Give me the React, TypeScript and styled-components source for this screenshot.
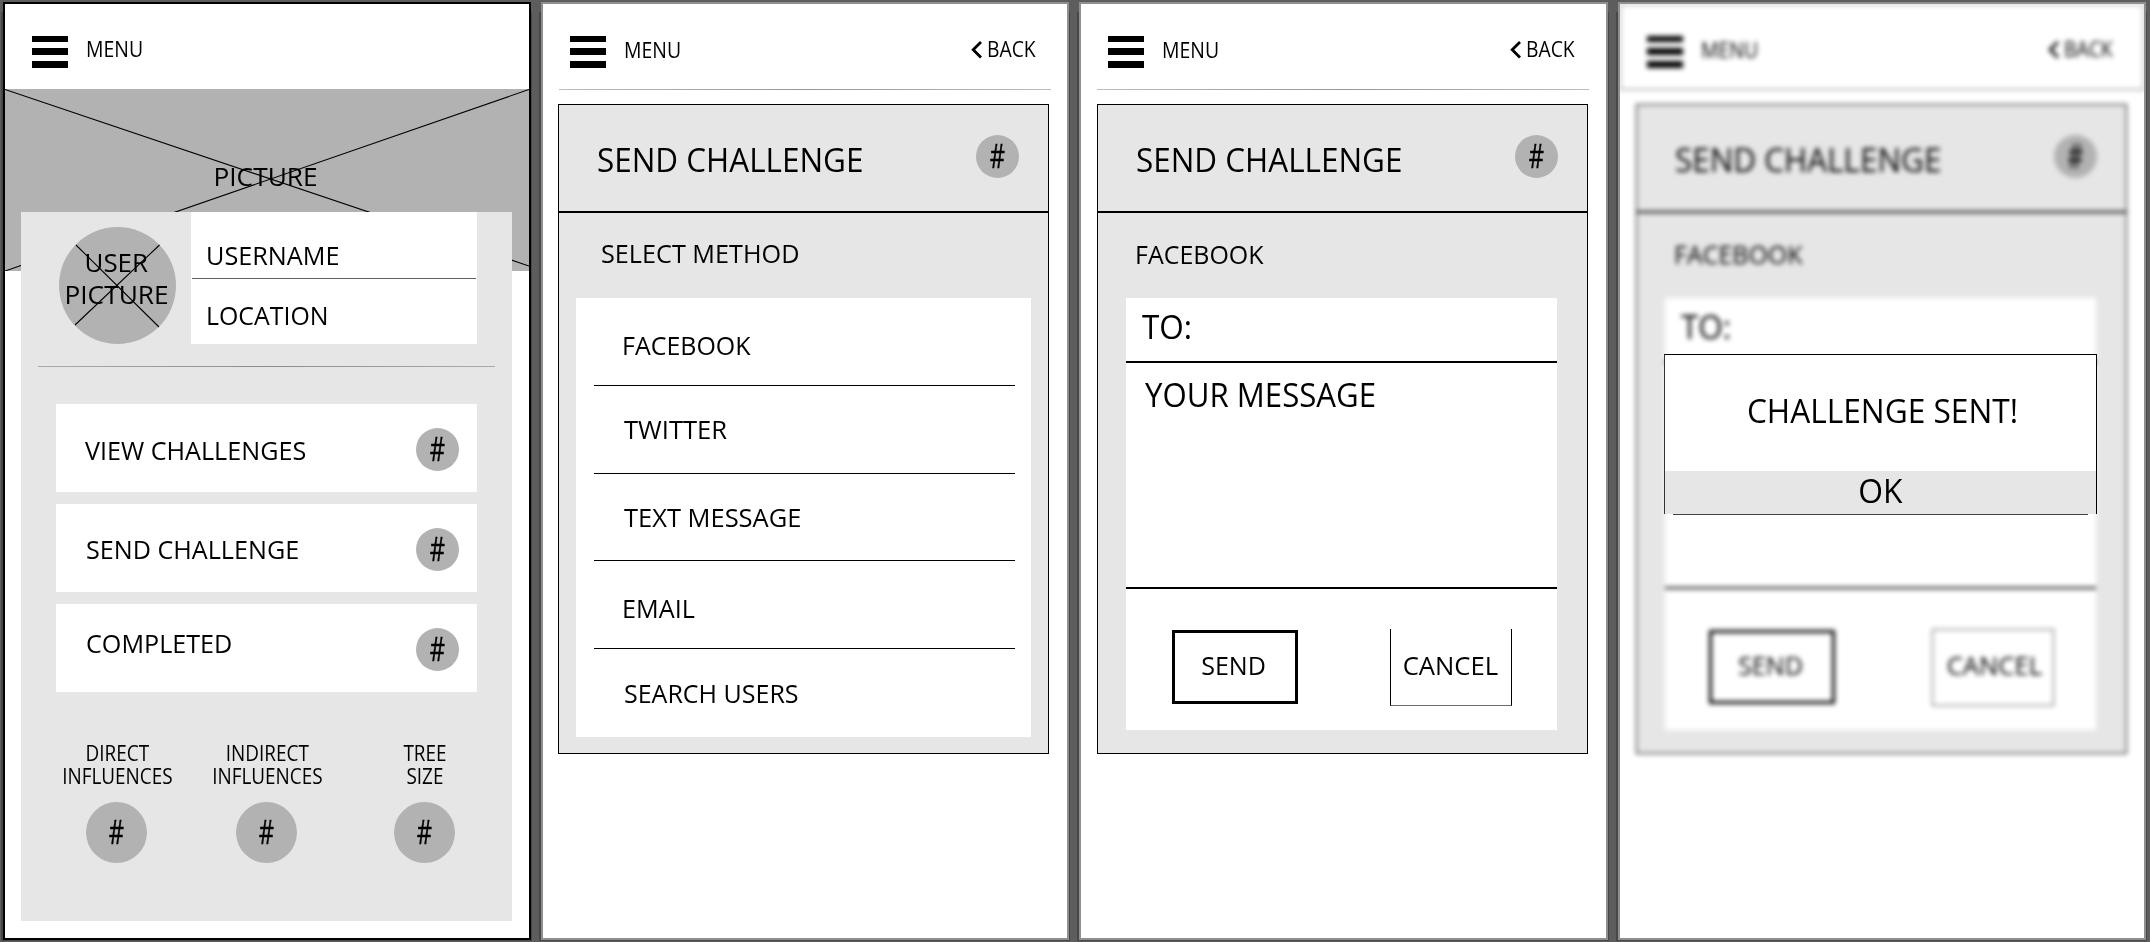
import React from "react";
import styled, { createGlobalStyle, css } from "styled-components";

const GlobalStyle = createGlobalStyle`
  * { box-sizing: border-box; }
  body {
    margin: 0;
    background: #5d5d5d;
    color: #000;
    font-family: "Open Sans", "Noto Sans", sans-serif;
  }
`;

/* ---------- shared parts ---------- */

const Stage = styled.main`
  isolation: isolate;
  display: flex;
  gap: 10px;
  width: 2150px;
  height: 942px;
  padding: 2px 0 0 3px;
  overflow: hidden;
`;

const Screen = styled.section<{ $edge?: string; $wide?: boolean }>`
  position: relative;
  flex: none;
  width: ${(p) => (p.$wide ? 529 : 528)}px;
  height: 938px;
  border: 2px solid ${(p) => p.$edge ?? "#8f8f8f"};
  background: #fff;

  &::before {
    content: "";
    position: absolute;
    z-index: -1;
    inset: 8px -3px -3px -4px;
    background: #484848;
  }
`;

/* Uppercase label, slightly condensed */
const Label = styled.span<{ $size?: number; $k?: number; $center?: boolean }>`
  display: block;
  flex: none;
  white-space: nowrap;
  font-size: ${(p) => p.$size ?? 26}px;
  line-height: 1;
  transform: scaleX(${(p) => p.$k ?? 0.967});
  transform-origin: ${(p) => (p.$center ? "center" : "left")};
`;

const HashLabel = styled(Label)`
  margin-bottom: 2px;
  -webkit-text-stroke: 0.4px #000;
`;

const TopBar = styled.header`
  display: flex;
  align-items: flex-start;
  height: 85px;
  padding: 32px 27px 0;
`;

const Bars = styled.div`
  display: grid;
  grid-template-rows: 6px 7px 7px;
  row-gap: 6px;
  width: 36px;
  margin-right: 18px;

  i { background: #000; }
`;

const MenuLabel = styled(Label)<{ $drop: number }>`
  margin-top: ${(p) => p.$drop}px;
`;

const BackLink = styled.div`
  display: flex;
  gap: 5px;
  margin: 3px 0 0 auto;

  svg { margin-top: 2px; }
`;

const Badge = styled.div<{ $size?: number }>`
  display: flex;
  flex: none;
  align-items: center;
  justify-content: center;
  width: ${(p) => p.$size ?? 43}px;
  height: ${(p) => p.$size ?? 43}px;
  border-radius: 50%;
  background: #b2b2b2;
`;

const Hash = ({ size }: { size?: number }) => (
  <Badge $size={size}>
    <HashLabel $size={32} $k={0.74} $center>#</HashLabel>
  </Badge>
);

const MenuBar = ({ back, drop = 4 }: { back?: boolean; drop?: number }) => (
  <TopBar>
    <Bars><i /><i /><i /></Bars>
    <MenuLabel $size={21} $k={0.925} $drop={drop}>MENU</MenuLabel>
    {back && (
      <BackLink>
        <svg width="11" height="18" viewBox="0 0 11 18" fill="none" stroke="#000" strokeWidth="2.8">
          <path d="M10 1 2.200 8.800l7.800 7.800" />
        </svg>
        <Label $size={21} $k={0.92}>BACK</Label>
      </BackLink>
    )}
  </TopBar>
);

/* ---------- profile screen ---------- */

const Hero = styled.div`
  position: relative;
  display: flex;
  justify-content: center;
  height: 182px;
  padding: 75px 2px 0 0;
  background: #b2b2b2;
`;

const Cross = styled.svg`
  position: absolute;
  inset: 0;
  fill: none;
  stroke: #000;
  stroke-width: 1.1;
`;

const ProfileCard = styled.div`
  position: relative;
  width: 491px;
  height: 709px;
  margin: -59px 0 0 16px;
  background: #e6e6e6;
`;

const ProfileTop = styled.div`
  display: flex;
  padding-left: 38px;
`;

const Avatar = styled.div`
  position: relative;
  display: flex;
  flex-direction: column;
  align-items: center;
  gap: 6px;
  width: 117px;
  height: 117px;
  margin: 15px 15px 0 0;
  padding: 23px 2px 0 0;
  border-radius: 50%;
  background: #b2b2b2;
`;

const Identity = styled.div`
  width: 286px;
  height: 132px;
  padding: 0 1px;
  background: #fff;
`;

const IdentityRow = styled.div<{ $ruled?: boolean; $top: number }>`
  height: 67px;
  padding: ${(p) => p.$top}px 0 0 14px;
  ${(p) => p.$ruled && css`border-bottom: 1px solid #5f5f5f;`}
`;

const SoftRule = styled.div`
  height: 1px;
  margin: 22px 17px 37px;
  background: linear-gradient(90deg, #ababab, #8d8d8d 50%, #ababab);
`;

const Actions = styled.div`
  display: grid;
  gap: 12px;
  width: 421px;
  margin-left: 35px;
`;

const Action = styled.div<{ $top: number; $indent: number }>`
  display: flex;
  justify-content: space-between;
  height: 88px;
  padding: 0 18px 0 ${(p) => p.$indent}px;
  background: #fff;

  > ${Label} { margin-top: ${(p) => p.$top}px; }
  > ${Badge} { margin-top: 24px; }
`;

const Stats = styled.div`
  display: grid;
  grid-template-columns: 150px 150px 166px;
  margin: 50px 0 0 21px;
`;

const Stat = styled.div`
  display: flex;
  flex-direction: column;
  align-items: center;

  > ${Badge} { margin: 14px 2px 0 0; }
`;

const StatLabel = styled(Label)`
  line-height: 23px;
  text-align: center;
`;

const actions: [string, number, number][] = [
  ["VIEW CHALLENGES", 33, 29],
  ["SEND CHALLENGE", 32, 30],
  ["COMPLETED", 26, 30],
];

const stats: [string, string][] = [
  ["DIRECT", "INFLUENCES"],
  ["INDIRECT", "INFLUENCES"],
  ["TREE", "SIZE"],
];

const ProfileScreen = () => (
  <Screen $edge="#000">
    <MenuBar drop={3} />
    <Hero>
      <Label $size={25.5} $k={1.03} $center>PICTURE</Label>
      <Cross width="524" height="182" viewBox="0 0 524 182">
        <path d="M0 .5 524 177M524 .5 0 182" />
      </Cross>
    </Hero>
    <ProfileCard>
      <ProfileTop>
        <Avatar>
          <Label $size={25.5} $k={1.015} $center>USER</Label>
          <Label $size={25.5} $k={1.03} $center>PICTURE</Label>
          <Cross width="117" height="117" viewBox="0 0 117 117">
            <path d="M17 18 100 100M100.500 18 16 98" />
          </Cross>
        </Avatar>
        <Identity>
          <IdentityRow $ruled $top={30}><Label $k={0.97}>USERNAME</Label></IdentityRow>
          <IdentityRow $top={23}><Label $k={0.957}>LOCATION</Label></IdentityRow>
        </Identity>
      </ProfileTop>
      <SoftRule />
      <Actions>
        {actions.map(([text, top, indent]) => (
          <Action key={text} $top={top} $indent={indent}>
            <Label>{text}</Label>
            <Hash />
          </Action>
        ))}
      </Actions>
      <Stats>
        {stats.map(([a, b]) => (
          <Stat key={a}>
            <StatLabel $size={21} $k={0.9} $center>{a}<br />{b}</StatLabel>
            <Hash size={61} />
          </Stat>
        ))}
      </Stats>
    </ProfileCard>
  </Screen>
);

/* ---------- challenge screens ---------- */

const HeaderRule = styled.div`
  width: 492px;
  height: 1px;
  margin: 0 0 14px 16px;
  background: linear-gradient(90deg, #bdbdbd, #969696 50%, #bdbdbd);
`;

const Card = styled.div<{ $left: number }>`
  width: 491px;
  height: 650px;
  margin-left: ${(p) => p.$left}px;
  border: 1px solid #000;
  background: #e6e6e6;
`;

const CardHead = styled.div`
  display: flex;
  justify-content: space-between;
  height: 108px;
  padding: 0 29px 0 38px;
  border-bottom: 2px solid #000;

  > ${Label} { margin-top: 38px; }
  > ${Badge} { margin-top: 30px; }
`;

const CardTitle = styled.div<{ $left: number; $top: number }>`
  height: 85px;
  padding: ${(p) => p.$top}px 0 0 ${(p) => p.$left}px;
`;

const MethodList = styled.div`
  width: 455px;
  height: 439px;
  margin-left: 17px;
  padding: 0 16px 0 18px;
  background: #fff;
`;

const Method = styled.div<{ $top: number; $height: number; $indent: number }>`
  height: ${(p) => p.$height}px;
  padding: ${(p) => p.$top}px 0 0 ${(p) => p.$indent}px;
  border-bottom: 1px solid #000;

  &:last-child { border-bottom: 0; }
`;

const Form = styled.div`
  width: 431px;
  height: 432px;
  margin-left: 28px;
  background: #fff;
`;

const ToField = styled.div`
  height: 65px;
  padding: 12px 0 0 16px;
  border-bottom: 2px solid #000;
`;

const MessageField = styled.div`
  height: 226px;
  padding: 15px 0 0 19px;
  border-bottom: 2px solid #000;
`;

const Buttons = styled.div<{ $spread?: boolean }>`
  display: flex;
  justify-content: space-between;
  align-items: flex-start;
  padding: ${(p) => (p.$spread ? "41px 42px 0 44px" : "41px 45px 0 46px")};
`;

const SendButton = styled.div`
  display: flex;
  justify-content: center;
  width: 126px;
  height: 74px;
  padding: 19px 2px 0 0;
  border: 3px solid #000;
`;

const CancelButton = styled.div<{ $boxed?: boolean }>`
  display: flex;
  justify-content: center;
  width: 122px;
  height: 77px;
  margin-top: -1px;
  padding: 23px 1px 0 0;
  border: solid #000;
  border-width: 0 1px 1px;
  border-bottom-color: #6b6b6b;
  ${(p) => p.$boxed && css`
    padding: 22px 0 0 2px;
    border: 1px solid #555;
  `}
`;

const methods: [string, number, number, number, number][] = [
  ["FACEBOOK", 34, 88, 28, 0.96],
  ["TWITTER", 30, 88, 30, 0.985],
  ["TEXT MESSAGE", 30, 87, 30, 0.98],
  ["EMAIL", 34, 88, 28, 0.97],
  ["SEARCH USERS", 31, 88, 30, 0.962],
];

const ChallengeHead = () => (
  <CardHead>
    <Label $size={33.5} $k={0.938}>SEND CHALLENGE</Label>
    <Hash />
  </CardHead>
);

const MethodScreen = () => (
  <Screen>
    <MenuBar back />
    <HeaderRule />
    <Card $left={15}>
      <ChallengeHead />
      <CardTitle $left={42} $top={27}><Label $k={0.97}>SELECT METHOD</Label></CardTitle>
      <MethodList>
        {methods.map(([text, top, height, indent, k]) => (
          <Method key={text} $top={top} $height={height} $indent={indent}>
            <Label $k={k}>{text}</Label>
          </Method>
        ))}
      </MethodList>
    </Card>
  </Screen>
);

const MessageCard = ({ left, sent }: { left: number; sent?: boolean }) => (
  <Card $left={left}>
    <ChallengeHead />
    <CardTitle $left={37} $top={28}><Label $k={0.96}>FACEBOOK</Label></CardTitle>
    <Form>
      <ToField><Label $size={33.5} $k={0.94}>TO:</Label></ToField>
      <MessageField>
        {!sent && <Label $size={33.5} $k={0.931}>YOUR MESSAGE</Label>}
      </MessageField>
      <Buttons $spread={sent}>
        <SendButton><Label $k={0.965} $center>SEND</Label></SendButton>
        <CancelButton $boxed={sent}><Label $k={0.987} $center>CANCEL</Label></CancelButton>
      </Buttons>
    </Form>
  </Card>
);

const MessageScreen = () => (
  <Screen $wide>
    <MenuBar back />
    <HeaderRule />
    <MessageCard left={16} />
  </Screen>
);

/* ---------- confirmation screen ---------- */

const Backdrop = styled.div`
  height: 100%;
  overflow: hidden;
`;

const Blurred = styled.div`
  filter: blur(2.6px);
`;

const BarFrame = styled.div`
  height: 86px;
  margin-bottom: 14px;
  border: 1px solid #777;

  ${TopBar} {
    height: 84px;
    padding: 31px 26px 0;
  }
`;

const Dialog = styled.div`
  position: absolute;
  top: 350px;
  left: 44px;
  width: 433px;
`;

const DialogBody = styled.div`
  display: flex;
  flex-direction: column;
  height: 160px;
  border: solid #000;
  border-width: 1px 1px 0;
  border-left-color: #333;
  background: #fff;
`;

const DialogMessage = styled.div`
  display: flex;
  justify-content: center;
  height: 116px;
  padding: 39px 0 0 3px;
`;

const DialogAction = styled.div`
  display: flex;
  flex: 1;
  justify-content: center;
  padding-top: 3px;
  background: #e6e6e6;
`;

const DialogRule = styled.div`
  height: 1px;
  margin: 0 9px;
  background: #444;
`;

const SentScreen = () => (
  <Screen>
    <Backdrop>
      <Blurred>
        <BarFrame><MenuBar back /></BarFrame>
        <MessageCard left={16} sent />
      </Blurred>
    </Backdrop>
    <Dialog>
      <DialogBody>
        <DialogMessage><Label $size={33.5} $k={0.945} $center>CHALLENGE SENT!</Label></DialogMessage>
        <DialogAction><Label $size={33.5} $k={0.95} $center>OK</Label></DialogAction>
      </DialogBody>
      <DialogRule />
    </Dialog>
  </Screen>
);

export default function App() {
  return (
    <>
      <GlobalStyle />
      <Stage>
        <ProfileScreen />
        <MethodScreen />
        <MessageScreen />
        <SentScreen />
      </Stage>
    </>
  );
}
